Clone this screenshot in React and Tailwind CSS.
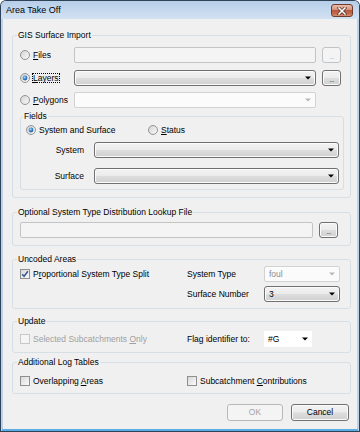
import React from 'react'

const btnFace =
  'border border-[#707070] rounded-[3px] bg-[linear-gradient(#f3f3f3,#ebebeb_48%,#dddddd_52%,#d0d0d0)] shadow-[inset_0_0_0_1px_#fbfbfb]'

export default function App() {
  return (
    <div className="w-[360px] h-[432px] bg-[#2f4257] p-px rounded-t-[6px] font-['Liberation_Sans',Arial,sans-serif] text-[8.5px] leading-none text-black select-none">
      <div className="h-full flex flex-col bg-[#bcd1ea] rounded-t-[5px]">
        <div className="h-[18px] shrink-0 flex items-start justify-between pl-[5px] pr-[6px] rounded-t-[5px] bg-[linear-gradient(#b7cee9,#d3e2f3)]">
          <span className="text-[9px] mt-[5px]">Area Take Off</span>
          <CloseButton />
        </div>

        <div className="flex-1 mx-[2px] bg-[#f0f0f0] pl-[9px] pr-[6px] pt-[11px] flex flex-col">
          <Group title="GIS Surface Import" className="pl-[7px] pr-[6px] pt-[7px] pb-[7px]">
            <div className="flex items-center h-[16px]">
              <RadioLabel label="Files" u="F" />
              <div className="flex-1 h-[16px] border border-[#c4c4c4] bg-[#f4f4f4] rounded-[2px]" />
              <DotsButton disabled />
            </div>
            <div className="flex items-center h-[16px] mt-[7px]">
              <RadioLabel label="Layers" u="L" checked focus />
              <Combo className="flex-1" />
              <DotsButton />
            </div>
            <div className="flex items-center h-[16px] mt-[6px]">
              <RadioLabel label="Polygons" u="P" />
              <Combo className="flex-1" variant="disabled" />
              <div className="w-[19px] ml-[6px] mr-[3px]" />
            </div>

            <Group title="Fields" className="mt-[3px] pl-[5px] pr-[4px] pt-[4px] pb-[5px]">
              <div className="flex items-center h-[10px]">
                <div className="w-[122px] flex items-center gap-[3px]">
                  <Radio checked />
                  <span>System and Surface</span>
                </div>
                <div className="flex items-center gap-[3px]">
                  <Radio />
                  <span><u>S</u>tatus</span>
                </div>
              </div>
              <div className="flex items-center h-[16px] mt-[7px]">
                <span className="w-[58px] text-right">System</span>
                <Combo className="flex-1 ml-[10px]" />
              </div>
              <div className="flex items-center h-[16px] mt-[10px]">
                <span className="w-[58px] text-right">Surface</span>
                <Combo className="flex-1 ml-[10px]" />
              </div>
            </Group>
          </Group>

          <Group title="Optional System Type Distribution Lookup File" className="mt-[9px] pl-[7px] pr-[9px] pt-[5px] pb-[7px]">
            <div className="flex items-center h-[16px]">
              <div className="flex-1 h-[16px] border border-[#c4c4c4] bg-[#f4f4f4] rounded-[2px]" />
              <DotsButton className="mr-0" />
            </div>
          </Group>

          <Group title="Uncoded Areas" className="mt-[8px] pl-[7px] pr-[10px] pt-[2px] pb-[6px]">
            <div className="flex">
              <div className="w-[167px] h-[16px] flex items-center">
                <CheckLabel checked>
                  P<u>r</u>oportional System Type Split
                </CheckLabel>
              </div>
              <div className="flex flex-col gap-[4px]">
                <div className="flex items-center h-[16px]">
                  <span className="w-[77px]">System Type</span>
                  <Combo className="w-[76px]" variant="disabled" value="foul" />
                </div>
                <div className="flex items-center h-[16px]">
                  <span className="w-[77px]">Surface Number</span>
                  <Combo className="w-[76px]" value="3" />
                </div>
              </div>
            </div>
          </Group>

          <Group title="Update" className="mt-[7px] pl-[7px] pr-[10px] pt-[5px] pb-[5px]">
            <div className="flex items-center h-[16px]">
              <div className="w-[167px] flex items-center">
                <CheckLabel disabled>
                  Selected Subcatchments <u>O</u>nly
                </CheckLabel>
              </div>
              <span className="w-[77px]">Flag identifier to:</span>
              <Combo className="w-[48px]" variant="flat" value="#G" />
            </div>
          </Group>

          <Group title="Additional Log Tables" className="mt-[4px] pl-[7px] pr-[10px] pt-[9px] pb-[7px]">
            <div className="flex items-center h-[10px]">
              <div className="w-[167px] flex items-center">
                <CheckLabel>
                  Overlapping <u>A</u>reas
                </CheckLabel>
              </div>
              <CheckLabel>
                Subcatchment <u>C</u>ontributions
              </CheckLabel>
            </div>
          </Group>

          <div className="flex justify-end gap-[8px] mt-[10px] mr-[2px]">
            <button className="w-[56px] h-[17px] border border-[#b5b9bc] rounded-[3px] bg-[#f4f4f4] text-[#a3a3a3]">
              OK
            </button>
            <button className={`w-[58px] h-[17px] ${btnFace}`}>Cancel</button>
          </div>
        </div>
        <div className="h-[2px] shrink-0 mx-[1px] bg-[#5aaee3]" />
      </div>
    </div>
  )
}

function Group({ title, className = '', children }) {
  return (
    <fieldset className={`border border-[#d5dfe5] rounded-[3px] min-w-0 ${className}`}>
      <legend className="leading-[10px] px-[1px] -ml-[3px]">{title}</legend>
      {children}
    </fieldset>
  )
}

function RadioLabel({ label, u, checked, focus }) {
  return (
    <div className="w-[54px] flex items-center gap-[3px] shrink-0">
      <Radio checked={checked} />
      <span className={focus ? 'outline outline-1 outline-dotted outline-black' : ''}>
        <u>{u}</u>
        {label.slice(1)}
      </span>
    </div>
  )
}

function Radio({ checked }) {
  return (
    <svg width="10" height="10" viewBox="0 0 10 10" className="shrink-0">
      <defs>
        <linearGradient id="rfill" x1="0" y1="0" x2="1" y2="1">
          <stop offset="0" stopColor="#d2d2d2" />
          <stop offset="1" stopColor="#fbfbfb" />
        </linearGradient>
        <radialGradient id="rdot" cx="0.4" cy="0.35" r="0.7">
          <stop offset="0" stopColor="#a8d8f8" />
          <stop offset="0.6" stopColor="#2f7fc8" />
          <stop offset="1" stopColor="#174d90" />
        </radialGradient>
      </defs>
      <circle cx="5" cy="5" r="4.5" fill="url(#rfill)" stroke="#8a8a8a" strokeWidth="0.9" />
      {checked && <circle cx="5" cy="5" r="2.4" fill="url(#rdot)" />}
    </svg>
  )
}

function CheckLabel({ checked, disabled, children }) {
  return (
    <div className={`flex items-center gap-[3px] ${disabled ? 'text-[#a0a0a0]' : ''}`}>
      <span
        className={`w-[10px] h-[10px] shrink-0 flex items-center justify-center border ${
          disabled
            ? 'border-[#c8c8c8] bg-[#f5f5f5]'
            : 'border-[#8e8f8f] bg-[linear-gradient(135deg,#d8d8d8,#fbfbfb)]'
        }`}
      >
        {checked && (
          <svg width="8" height="8" viewBox="0 0 8 8">
            <path d="M1.2 4.2 L3.1 6.3 L6.9 1.2" stroke="#3a5594" strokeWidth="1.5" fill="none" />
          </svg>
        )}
      </span>
      <span>{children}</span>
    </div>
  )
}

function Arrow({ color = '#000' }) {
  return (
    <svg width="6" height="4" viewBox="0 0 6 4" className="shrink-0">
      <polygon points="0,0.5 6,0.5 3,3.6" fill={color} />
    </svg>
  )
}

function Combo({ className = '', variant = 'button', value = '' }) {
  let face = btnFace
  let text = 'text-black'
  let arrow = '#000'
  if (variant === 'disabled') {
    face = 'border border-[#d2d2d2] rounded-[2px] bg-[#fbfbfb]'
    text = 'text-[#8c8c8c]'
    arrow = '#b8b8b8'
  }
  if (variant === 'flat') {
    face = 'bg-white'
  }
  return (
    <div className={`h-[16px] flex items-center justify-between pl-[4px] pr-[4px] ${face} ${text} ${className}`}>
      <span>{value}</span>
      <Arrow color={arrow} />
    </div>
  )
}

function DotsButton({ disabled, className = '' }) {
  const face = disabled
    ? 'border border-[#c0c4c7] rounded-[3px] bg-[#f4f4f4] text-[#b0b0b0]'
    : `${btnFace} text-[#333]`
  return (
    <div className={`w-[19px] h-[16px] ml-[6px] mr-[3px] shrink-0 flex items-center justify-center ${face} ${className}`}>
      <span className="text-[7px] tracking-[-0.5px] mt-[2px]">...</span>
    </div>
  )
}

function CloseButton() {
  return (
    <div className="mt-[3px] w-[22px] h-[13px] rounded-[3px] border border-[#6e3b2e] bg-[linear-gradient(#ebbba8,#d99a80_40%,#b85a3f_50%,#c2664a_75%,#d98e70)] flex items-center justify-center">
      <svg width="10" height="8" viewBox="0 0 10 8">
        <path d="M2 1 L8 7 M8 1 L2 7" stroke="#4a2a22" strokeWidth="3" strokeLinecap="square" />
        <path d="M2 1 L8 7 M8 1 L2 7" stroke="#ffffff" strokeWidth="1.6" strokeLinecap="square" />
      </svg>
    </div>
  )
}
